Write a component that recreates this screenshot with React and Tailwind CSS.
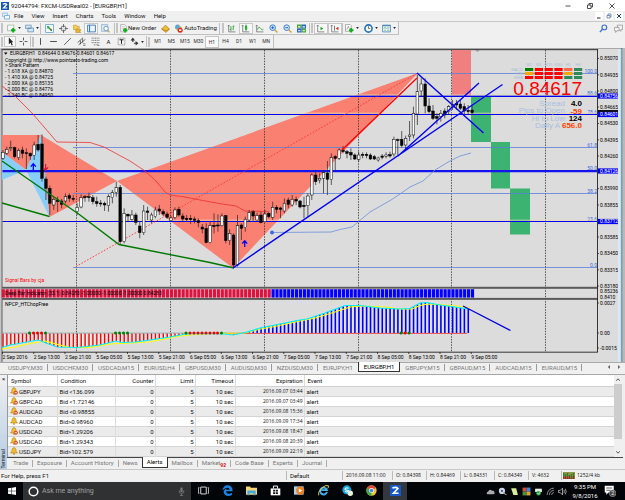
import React, { useState } from 'react'

const MENU = ['File', 'View', 'Insert', 'Charts', 'Tools', 'Window', 'Help']
const PERIODS = ['M1', 'M5', 'M15', 'M30', 'H1', 'H4', 'D1', 'W1', 'MN']

const CHART_TABS = [
  'USDJPY,M30', 'USDCHF,M30', 'USDCAD,M15', 'EURUSD,H4', 'GBPUSD,M30', 'AUDUSD,M30', 'NZDUSD,M30',
  'EURJPY,H1', 'EURGBP,H1', 'GBPJPY,M15', 'GBPAUD,M15', 'AUDCAD,M15', 'EURAUD,M15',
]

const TERMINAL_TABS = [
  'Trade', 'Exposure', 'Account History', 'News', 'Alerts', 'Mailbox', 'Market', 'Code Base', 'Experts', 'Journal',
]

const ALERTS = [
  { symbol: 'GBPJPY', condition: 'Bid <136.099', expiration: '2016.09.07 03:44', off: true },
  { symbol: 'GBPCAD', condition: 'Bid <1.72146', expiration: '2016.09.07 03:49', off: true },
  { symbol: 'AUDCAD', condition: 'Bid <0.98855', expiration: '2016.09.08 15:36', off: true },
  { symbol: 'AUDCAD', condition: 'Bid>0.98960', expiration: '2016.09.09 17:34', off: false },
  { symbol: 'USDCAD', condition: 'Bid>1.29206', expiration: '2016.09.08 18:47', off: true },
  { symbol: 'USDCAD', condition: 'Bid>1.29343', expiration: '2016.09.08 20:39', off: true },
  { symbol: 'USDJPY', condition: 'Bid>102.579', expiration: '2016.09.09 22:19', off: false },
]

const QUOTE = ['O: 0.84398', 'H: 0.84469', 'L: 0.84331', 'C: 0.84349']

// high, body top, body bottom, low, 1 = bullish (in thirds of a pixel from the chart top)
const CANDLES = [
  [315, 322, 340, 345, 1], [305, 313, 325, 330, 1], [287, 308, 311, 318, 1], [305, 308, 335, 340, 0],
  [310, 316, 338, 345, 1], [305, 315, 325, 340, 0], [310, 323, 326, 372, 0], [322, 325, 333, 345, 0],
  [290, 300, 332, 345, 1], [270, 298, 315, 320, 0], [268, 297, 400, 410, 0], [395, 402, 430, 465, 0],
  [422, 430, 475, 510, 0], [455, 463, 480, 495, 1], [455, 465, 470, 500, 0], [462, 468, 478, 490, 0],
  [445, 455, 468, 475, 1], [445, 452, 460, 470, 0], [450, 460, 463, 470, 0], [475, 487, 500, 510, 1],
  [448, 458, 486, 490, 1], [450, 455, 458, 470, 0], [443, 455, 458, 470, 0], [450, 458, 470, 478, 0],
  [455, 470, 476, 485, 0], [465, 474, 477, 485, 0], [470, 475, 480, 498, 0], [448, 455, 482, 500, 1],
  [435, 443, 458, 475, 1], [410, 428, 443, 455, 1], [420, 427, 590, 600, 0], [490, 505, 590, 595, 1],
  [505, 508, 513, 530, 0], [495, 510, 523, 527, 1], [503, 510, 532, 540, 0], [530, 543, 563, 580, 0],
  [480, 498, 563, 570, 1], [485, 498, 502, 525, 0], [503, 510, 525, 535, 1], [485, 495, 515, 520, 1],
  [480, 492, 498, 510, 0], [493, 500, 507, 513, 0], [500, 507, 517, 521, 0], [513, 519, 527, 530, 1],
  [487, 495, 518, 523, 1], [485, 493, 510, 515, 0], [505, 513, 522, 530, 0], [510, 520, 524, 530, 0],
  [510, 520, 524, 537, 0], [515, 522, 526, 535, 0], [520, 527, 533, 547, 0], [537, 546, 552, 565, 0],
  [535, 550, 593, 595, 0], [530, 542, 593, 595, 1], [505, 541, 545, 565, 0], [508, 540, 543, 560, 0],
  [505, 513, 542, 545, 1], [510, 512, 587, 595, 0], [553, 565, 587, 600, 1], [565, 570, 660, 668, 0],
  [510, 542, 660, 665, 1], [535, 540, 550, 585, 0], [515, 523, 548, 560, 1], [495, 503, 525, 530, 1],
  [495, 500, 513, 530, 0], [503, 512, 525, 527, 1], [500, 510, 533, 535, 0], [495, 507, 530, 533, 1],
  [500, 505, 515, 520, 0], [470, 487, 517, 525, 1], [480, 487, 493, 505, 0], [485, 489, 493, 520, 0],
  [460, 475, 498, 505, 1], [458, 465, 478, 490, 0], [450, 463, 480, 485, 1], [455, 463, 468, 480, 0],
  [465, 468, 486, 490, 0], [455, 481, 485, 520, 0], [445, 453, 482, 517, 1], [385, 390, 450, 465, 1],
  [380, 390, 410, 420, 0], [385, 400, 405, 415, 1], [375, 383, 400, 445, 1], [348, 384, 403, 450, 0],
  [325, 338, 404, 420, 1], [330, 335, 340, 375, 0], [310, 315, 340, 345, 1], [303, 315, 320, 325, 0],
  [315, 320, 325, 340, 0], [310, 322, 330, 345, 0], [325, 330, 342, 345, 0], [320, 330, 343, 350, 1],
  [322, 328, 331, 340, 0], [322, 328, 332, 340, 0], [325, 330, 342, 345, 0], [330, 335, 342, 345, 0],
  [335, 339, 345, 350, 1], [327, 333, 337, 343, 0], [322, 330, 334, 340, 1], [320, 329, 333, 338, 0],
  [275, 283, 327, 335, 1], [280, 284, 287, 330, 0], [258, 283, 301, 308, 0], [272, 280, 300, 315, 1],
  [228, 270, 274, 288, 1], [185, 205, 270, 280, 1], [90, 140, 207, 240, 1], [100, 117, 138, 155, 1],
  [100, 117, 183, 205, 0], [160, 183, 200, 205, 0], [180, 198, 220, 225, 0], [205, 215, 220, 238, 0],
  [195, 205, 215, 230, 1], [190, 198, 210, 220, 0], [180, 185, 200, 210, 1], [165, 178, 188, 195, 1],
  [165, 175, 180, 195, 0], [165, 177, 190, 195, 0], [175, 185, 198, 210, 0], [180, 196, 200, 210, 0],
  [182, 195, 203, 210, 0],
]

const STEP = 3.91
const barX = (i) => 2.9 + i * STEP
const barY = (v) => 45 + v / 3

// fast line of the lower indicator, also the top of its histogram
const FAST = [
  [2, 347.5], [10, 345], [27, 342], [38, 340], [46, 343], [57, 347], [77, 347.5], [100, 345], [116, 341],
  [122, 342.5], [135, 342], [150, 340], [170, 337], [186, 334], [205, 333.5], [225, 334], [233, 335],
  [245, 332.5], [262, 327.5], [270, 326], [300, 320], [307, 319], [322, 314], [333, 310], [345, 305.5],
  [360, 305.5], [380, 308], [400, 309], [410, 308.5], [420, 303], [427, 302.5], [440, 305], [455, 307], [468, 309],
]
const SLOW = [
  [2, 349], [15, 347], [30, 343.5], [45, 341], [60, 345], [70, 347.5], [90, 347.5], [110, 344], [130, 343],
  [148, 342], [165, 339], [180, 336], [195, 334.5], [215, 333.5], [245, 333], [260, 329], [270, 327.5],
  [300, 321], [315, 318], [335, 312], [350, 307], [360, 306], [385, 307], [400, 309], [412, 309], [420, 305.5],
  [428, 304], [445, 305], [462, 306.5], [470, 308],
]

const fastAt = (x) => {
  const k = FAST.findIndex((p) => p[0] >= x)
  if (k < 1) return FAST[k === 0 ? 0 : FAST.length - 1][1]
  const [x0, y0] = FAST[k - 1]
  const [x1, y1] = FAST[k]
  return y0 + ((y1 - y0) * (x - x0)) / (x1 - x0)
}

const LEVELS = [
  [73.5, '100.0'], [96, '88.6'], [114.5, '78.6'], [147.5, '61.8'], [171, '50.0'], [193.5, '38.2'],
  [221.5, '23.6'], [267.5, '0.0'],
]

const SCALE = [
  [58.5, '0.85070'], [74.8, '0.84935'], [91, '0.84800'], [107, '0.84665'], [123.5, '0.84530'],
  [139.8, '0.84395'], [156, '0.84260'], [188.6, '0.83990'], [205, '0.83855'], [237, '0.83585'],
  [253.5, '0.83450'], [269.8, '0.83315'], [286, '0.83180'], [303, '0.0027'], [333, '0.00'], [348, '-0.0015'],
]

const TAGS = [[96, '0.84756'], [114.5, '0.84601'], [171, '0.84126'], [221.5, '0.83712']]

const DATES = [
  '2 Sep 2016', '2 Sep 13:00', '2 Sep 21:00', '5 Sep 05:00', '5 Sep 13:00', '5 Sep 21:00', '6 Sep 05:00',
  '6 Sep 13:00', '6 Sep 21:00', '7 Sep 05:00', '7 Sep 13:00', '7 Sep 21:00', '8 Sep 05:00', '8 Sep 13:00',
  '8 Sep 21:00', '9 Sep 05:00',
]

const SIGNALS = [
  ['#008000', '#f00', '#f00', '#f00', '#ff6347', '#2e8b57'],
  ['#ffa500', '#f00', '#f00', '#f00', '#ffa500', '#2e8b57'],
  ['#f00', '#f00', '#f00', '#f00', '#2e8b57', '#2e8b57'],
]

const DOTS = [
  [29.5, 'g'], [33.5, 'r'], [37.5, 'r'], [41.5, 'r'], [45.5, 'g'], [115.5, 'g'], [119.5, 'g'], [123.5, 'g'],
  [127.5, 'g'], [186, 'g'], [190, 'r'], [194, 'r'], [198, 'r'], [202, 'r'], [206, 'r'], [210, 'r'], [214, 'r'],
  [217.5, 'r'], [221.5, 'g'], [401, 'g'], [405, 'r'], [409, 'g'],
]

const INFO = [
  'Copyright @ http://www.pointzero-trading.com', '> Shark Pattern', '- 1.618 XA @ 0.84870',
  '- 1.410 XA @ 0.84725', '- 2.000 XA @ 0.85135', '- 2.000 BC @ 0.84776', '- 2.240 BC @ 0.84950',
]

const pts = (list) => list.map((p) => p.join(',')).join(' ')

function Chart() {
  return (
    <svg
      viewBox="0 48 625 314"
      className="block w-full font-['Roboto','Open_Sans',sans-serif] text-[5px]"
      role="img"
      aria-label="EURGBP H1 chart"
    >
      <rect x="0" y="48" width="625" height="314" fill="#dcdcdc" />
      <rect x="0" y="48" width="625" height="1" fill="#a8a8a8" />
      <rect x="0" y="48" width="1.5" height="314" fill="#c4c4c4" />
      <rect x="1.5" y="49" width="596" height="1.2" fill="#4a4a4a" />
      <rect x="1.5" y="49" width="1" height="313" fill="#5a5a5a" />

      {/* shark pattern */}
      <polygon points="2,135 41,135 26,170 2,152" fill="#fa8072" />
      <polygon points="2,152 26,170 2,180" fill="#87cefa" />
      <polygon points="41,135 49.5,217 26,170" fill="#87cefa" />
      <polygon points="41,135 117,181 49.5,217" fill="#fa8072" />
      <polygon points="117,181 418,73 233,268" fill="#fa8072" />

      <rect x="452" y="50" width="19" height="46" fill="#f08080" />
      <rect x="471" y="96" width="20" height="46" fill="#3cb371" />
      <rect x="491" y="142" width="19" height="46.5" fill="#3cb371" />
      <rect x="510" y="188.5" width="20" height="46" fill="#3cb371" />

      {/* day separators */}
      {[76.5, 170.5, 264.5, 358.5, 451.5, 545.5].map((x) => (
        <line key={x} x1={x} x2={x} y1="50" y2="352" stroke="#333" strokeWidth="0.8" strokeDasharray="1.5 1.2" />
      ))}

      {/* fibo and pivot levels */}
      {LEVELS.map(([y, label]) => (
        <g key={label}>
          <line x1="73" x2="597" y1={y} y2={y} stroke="#5b7fdc" strokeWidth="0.8" />
          <text x="597" y={y - 1} textAnchor="end" fill="#4169e1">{label}</text>
        </g>
      ))}
      <path d="M2.5 95H597M2.5 113.2H597M2.5 220.2H597" stroke="#e6dcb0" strokeWidth="0.8" />
      <path d="M2.5 96.3H597M2.5 114.5H597M2.5 221.5H597" stroke="#0000f0" strokeWidth="1.2" />
      <path d="M2.5 171.2H597" stroke="#1414ee" strokeWidth="2.2" />

      {/* moving averages */}
      <polyline
        points="2,86 14,95 32,113 57,142 90,142.5 104,147 130,161 145,171 156,181 165,192 170,195 185,197 200,200 222,204 236,206 245,211 268,211.5"
        fill="none" stroke="#f03030" strokeWidth="0.8"
      />
      <polyline
        points="272,232.5 331,232 340,229.5 352,227 358,222 370,212 391,200 400,194 410,187 423,181 435,170 450,161 460,156 471,153"
        fill="none" stroke="#6a8fdc" strokeWidth="0.8"
      />
      <circle cx="272" cy="232.5" r="2" fill="#4169e1" />
      <line x1="76" y1="266.5" x2="418" y2="73" stroke="#f33" strokeWidth="0.9" strokeDasharray="1.6 1.6" />

      {/* candles */}
      {CANDLES.map(([high, top, bottom, low, up], i) => (
        <g key={i}>
          <line x1={barX(i)} x2={barX(i)} y1={barY(high)} y2={barY(low)} stroke="#222" strokeWidth="0.7" />
          <rect
            x={barX(i) - 1.3}
            y={barY(top)}
            width="2.6"
            height={Math.max((bottom - top) / 3, 0.8)}
            fill={up ? '#fff' : '#000'}
            stroke="#000"
            strokeWidth="0.5"
          />
        </g>
      ))}

      {/* trend lines */}
      <path d="M2 161L80 215L119 244.5L210 262.5L234 268M2 203L49.5 216.5" fill="none" stroke="#007a00" strokeWidth="1.4" />
      <path d="M342 150L417 78" stroke="#f00" strokeWidth="1.3" />
      <path d="M233 268L502.5 84.5M398 156L479 83M417 73L483.5 133" stroke="#0000f5" strokeWidth="1.4" />
      <path d="M33.3 170V164M30.8 166.6L33.3 163.8L35.8 166.6" fill="none" stroke="#00f" strokeWidth="1.3" />
      <path d="M45.6 164V170M43.1 167.4L45.6 170.2L48.1 167.4" fill="none" stroke="#dc143c" strokeWidth="1.3" />
      <path d="M244.7 247V241M242.2 243.6L244.7 240.8L247.2 243.6" fill="none" stroke="#00f" strokeWidth="1.3" />
      <path d="M475 50H480L477.5 52Z" fill="#999" />

      {/* header texts */}
      <path d="M4 52.5H7.5L5.75 54.8Z" fill="#000" />
      <text x="10" y="55" xmlSpace="preserve">EURGBP,H1  0.84644 0.84676 0.84601 0.84617</text>
      {INFO.map((line, i) => (
        <text key={line} x="5" y={61.5 + i * 5.9}>{line}</text>
      ))}
      <text x="5" y="281.5" fill="#f00" className="text-[5px]">Signal Bars by cja</text>

      {/* signal panel */}
      <g fill="#a9bcd8" className="font-['Liberation_Sans',Arial,sans-serif] text-[4px]">
        {['M1', 'M5', 'M15', 'M30', 'H1', 'H4'].map((p, i) => (
          <text key={p} x={529 + i * 9.8} y="66" textAnchor="middle">{p}</text>
        ))}
        {['MACD', 'STR', 'EMA'].map((p, i) => (
          <text key={p} x="523" y={71 + i * 4} textAnchor="end">{p}</text>
        ))}
      </g>
      {SIGNALS.map((row, r) =>
        row.map((color, c) => (
          <rect key={`${r}-${c}`} x={525 + c * 9.8} y={68 + r * 4} width="8.2" height="3" fill={color} />
        ))
      )}
      <g textAnchor="end" className="font-['Liberation_Sans',Arial,sans-serif] text-[8px]">
        <text x="582" y="95" fill="#f00" className="text-[19px]">0.84617</text>
        <g fill="#a9c0e0">
          <text x="565" y="106">Spread</text>
          <text x="565" y="113">Pips to Open</text>
          <text x="565" y="120.5">Hi to Low</text>
          <text x="560" y="128">Daily A</text>
        </g>
        <g className="font-bold">
          <text x="582" y="106">4.0</text>
          <text x="582" y="113.5" fill="#ff4500">-59</text>
          <text x="582" y="121">124</text>
          <text x="582" y="128" fill="#ff4500">656.0</text>
        </g>
      </g>

      {/* deep bar indicator */}
      <rect x="2" y="286.8" width="596" height="2" fill="#5a5a5a" />
      <rect x="2" y="297.9" width="596" height="2" fill="#5a5a5a" />
      <rect x="2" y="288.8" width="471" height="9" fill="#e8d8e8" />
      {CANDLES.map((c, i) => (
        <rect key={i} x={barX(i) - 1.2} y="289.2" width="3.2" height="8.4" fill={i < 69 ? '#dc143c' : '#00f'} />
      ))}
      <text x="5" y="295">Deep Bar Indicator (33.1) 0.84283 -1.00000 -1.00000 -1.00000 0.84283</text>

      {/* lower indicator */}
      <line x1="2.5" x2="250" y1="333.2" y2="333.2" stroke="#6f9aa0" strokeWidth="0.8" />
      {CANDLES.slice(0, 120).map((c, i) => {
        const x = barX(i)
        const y = fastAt(x)
        return y > 333.2 ? (
          <g key={i}>
            <rect x={x - 0.6} y="333.5" width="2.4" height={y - 333.5 + 0.1} fill="#fff" opacity="0.8" />
            <rect x={x - 0.6} y="333.5" width="1.4" height={y - 333.4} fill="#f00000" />
          </g>
        ) : (
          <g key={i}>
            <rect x={x - 1} y={y} width="3" height={333 - y} fill="#e4e4ff" />
            <rect x={x - 0.7} y={y} width="1.6" height={333 - y} fill="#0000f0" />
          </g>
        )
      })}
      <line x1="221" x2="467" y1="333.4" y2="333.4" stroke="#f04040" strokeWidth="0.9" />
      <polyline points={pts(SLOW)} fill="none" stroke="#ff0" strokeWidth="1.2" />
      <polyline points={pts(FAST)} fill="none" stroke="#00f0f5" strokeWidth="1.2" />
      {DOTS.map(([x, c]) => (
        <circle key={x} cx={x} cy="333" r="1.5" fill={c === 'g' ? '#008000' : '#f00000'} />
      ))}
      <line x1="463" y1="306" x2="510.5" y2="330.5" stroke="#0000e0" strokeWidth="1.4" />
      <text x="5" y="306">NPCP_HTChopFree</text>

      {/* axes */}
      <path d="M597.5 49V352.4M2 352.2H597.5" stroke="#222" strokeWidth="0.9" />
      {DATES.map((d, i) => (
        <g key={d}>
          <line x1={2.5 + i * 31.25} x2={2.5 + i * 31.25} y1="352" y2="354" stroke="#222" strokeWidth="0.8" />
          <text x={2.5 + i * 31.25} y="358.5">{d}</text>
        </g>
      ))}
      {SCALE.map(([y, label]) => (
        <g key={label}>
          <line x1="597" x2="599" y1={y} y2={y} stroke="#222" strokeWidth="0.7" />
          <text x="600" y={y + 1.8}>{label}</text>
        </g>
      ))}
      <text x="600" y="293.3">0.85236</text>
      <text x="600" y="298.8">0.8410</text>
      <rect x="598" y="110" width="20" height="4" fill="#111" />
      {TAGS.map(([y, label]) => (
        <g key={label}>
          <rect x="598" y={y - 2.6} width="20" height="5.2" fill="#00f" />
          <text x="600" y={y + 1.8} fill="#fff">{label}</text>
        </g>
      ))}

      {/* window frame on the right */}
      <rect x="618.5" y="49" width="3" height="313" fill="#bfe0f2" />
      <rect x="618.5" y="49" width="1" height="313" fill="#eef4f8" />
      <rect x="621.5" y="48" width="1" height="314" fill="#2c5f70" />
      <rect x="622.5" y="48" width="2.5" height="314" fill="#b8b8b8" />
    </svg>
  )
}

function Icon({ children, label, className = 'size-[9px]' }) {
  return (
    <svg viewBox="0 0 16 16" className={`${className} block shrink-0`} role="img" aria-label={label} fill="none">
      {children}
    </svg>
  )
}

function Caret() {
  return (
    <svg viewBox="0 0 4 3" className="ml-[2px] h-[2px] w-[3px] shrink-0" aria-hidden="true">
      <path d="M0 0H4L2 3Z" fill="#222" />
    </svg>
  )
}

function Tool({ label, pressed, width = 'w-[14px]', caret, children }) {
  return (
    <button
      type="button"
      aria-label={label}
      className={`flex h-[11px] ${width} shrink-0 items-center justify-center ${
        pressed ? 'border border-[#c8c8c8] bg-[#f8f8f8]' : ''
      }`}
    >
      <Icon>{children}</Icon>
      {caret && <Caret />}
    </button>
  )
}

function Sep() {
  return <span className="h-[11px] w-px shrink-0 bg-[#c0c0c0]" />
}

function Grip() {
  return <span className="mx-[1px] h-[10px] w-[2px] shrink-0 border-x border-[#c4c4c4]" />
}

const plus = <path d="M11 7V15M7 11H15" stroke="#0fae1c" strokeWidth="3.4" />
const axes = <path d="M3 2V14H15M1 4L3 2L5 4" stroke="#666" strokeWidth="1.3" />

function TopToolbar() {
  return (
    <div className="flex h-[13px] items-center justify-between">
      <div className="flex h-[13px] items-center border-r border-b border-[#c0c0c0] bg-[#f1f1f1]">
        <Grip />
        <Tool label="New chart" width="w-[19px]" caret>
          <path d="M1 2H12V12H1Z" fill="#fff" stroke="#6c9c6c" />
          {plus}
        </Tool>
        <Tool label="Profiles" width="w-[17px]" caret>
          <path d="M1 2H11V8H1ZM5 7H15V14H5Z" fill="#d4e6f5" stroke="#5f8fb4" strokeWidth="1.3" />
        </Tool>
        <Sep />
        <span className="w-[1px]" />
        <Tool label="Market watch">
          <path d="M1 1H15V15H1Z" fill="#fff" stroke="#5a9ad0" strokeWidth="1.4" />
          <path d="M3 8L7 3L8 7Z" fill="#1ca03a" />
          <path d="M8 8L13 9L11 13Z" fill="#e0402a" />
          <path d="M4 4L12 12" stroke="#1ca03a" strokeWidth="2" />
        </Tool>
        <Tool label="Data window">
          <circle cx="8" cy="8" r="4.5" stroke="#555" strokeWidth="1.4" />
          <path d="M8 0V6M8 10V16M0 8H6M10 8H16" stroke="#555" strokeWidth="1.4" />
        </Tool>
        <Tool label="Navigator">
          <path d="M1 2H6L7 4H11V10H1Z" fill="#f4cf5a" stroke="#b88d1c" />
          <path d="M8 8L10 11L14 10L12 13L14 15H5V10Z" fill="#f0b92c" stroke="#b0821a" />
        </Tool>
        <Tool label="Terminal" pressed>
          <path d="M1 2H15V14H1Z" fill="#eaf4fc" stroke="#3d7cb4" strokeWidth="1.6" />
          <path d="M4.5 2V14" stroke="#3d7cb4" strokeWidth="2" />
        </Tool>
        <Tool label="Strategy tester">
          <path d="M1 1H12V13H1Z" fill="#dcebf6" stroke="#6f9cc0" />
          <circle cx="9" cy="8" r="4" fill="#f6fbff" stroke="#5a88ae" strokeWidth="1.4" />
          <path d="M12 11L15 15" stroke="#c99a32" strokeWidth="2" />
        </Tool>
        <span className="w-[2px]" />
        <Sep />
        <Grip />
        <button type="button" className="flex items-center whitespace-nowrap">
          <Icon>
            <path d="M3 1H10L13 4V14H3Z" fill="#fff" stroke="#888" />
            <path d="M5 5H11M5 8H9" stroke="#999" />
            {plus}
          </Icon>
          New Order
        </button>
        <span className="w-[2px]" />
        <Tool label="MetaEditor">
          <path d="M1 9L8 2L15 9L9 15Z" fill="#f0bb35" stroke="#a87812" strokeWidth="1.2" />
          <path d="M1 9L9 12L15 9" stroke="#a87812" />
        </Tool>
        <button type="button" className="ml-[2px] flex items-center gap-px whitespace-nowrap">
          <Icon>
            <path d="M2 7L8 2L14 7L9 13Z" fill="#efbe48" stroke="#a77a1a" />
            <circle cx="6" cy="5" r="4" fill="#5ba4dc" />
            <circle cx="11" cy="11" r="4.5" fill="#dd2a1c" />
            <path d="M9 9.5H13V12.5H9Z" fill="#fff" />
          </Icon>
          AutoTrading
        </button>
        <span className="w-[2px]" />
        <Sep />
        <span className="w-[1px]" />
        <Grip />
        <Tool label="Bar chart">
          {axes}
          <path d="M7 4V12M11 3V11M11 4H13M5 10H7" stroke="#1a9a2c" strokeWidth="1.5" />
        </Tool>
        <Tool label="Candlesticks" pressed>
          {axes}
          <path d="M9 1V13" stroke="#087a1c" strokeWidth="1.2" />
          <path d="M7 3H11V10H7Z" fill="#17b52e" />
        </Tool>
        <Tool label="Line chart">
          {axes}
          <path d="M4 10Q7 3 10 8T15 9" stroke="#1a9a2c" strokeWidth="1.4" />
        </Tool>
        <Tool label="Zoom in">
          <circle cx="6.5" cy="6.5" r="5" fill="#cfe6fa" stroke="#2f77c8" strokeWidth="1.6" />
          <path d="M4 6.5H9M6.5 4V9" stroke="#1d5fb4" strokeWidth="1.6" />
          <path d="M10 10L15 15" stroke="#d0a030" strokeWidth="2.4" />
        </Tool>
        <Tool label="Zoom out">
          <circle cx="6.5" cy="6.5" r="5" fill="#cfe6fa" stroke="#2f77c8" strokeWidth="1.6" />
          <path d="M4 6.5H9" stroke="#1d5fb4" strokeWidth="1.6" />
          <path d="M10 10L15 15" stroke="#d0a030" strokeWidth="2.4" />
        </Tool>
        <Tool label="Tile windows">
          <path d="M0 1H8V8H0ZM8 8H16V15H8Z" fill="#4aa83a" />
          <path d="M8 1H16V8H8ZM0 8H8V15H0Z" fill="#2f66c4" />
          <path d="M2 4H6V6H2ZM10 4H14V6H10ZM2 11H6V13H2ZM10 11H14V13H10Z" fill="#fff" />
        </Tool>
        <Sep />
        <Grip />
        <Tool label="Auto scroll" pressed>
          {axes}
          <path d="M8 5L13 8L8 11Z" fill="#17a52c" />
        </Tool>
        <Tool label="Chart shift" pressed>
          {axes}
          <path d="M8 3V12" stroke="#555" strokeWidth="1.3" />
          <path d="M15 5L10 8L15 11Z" fill="#d03a20" />
        </Tool>
        <Sep />
        <Tool label="Indicators" width="w-[19px]" caret>
          <path d="M1 1H9L11 3V13H1Z" fill="#fff" stroke="#777" />
          <path d="M3 10L6 4L8 8" stroke="#666" />
          {plus}
        </Tool>
        <Tool label="Periods" width="w-[18px]" caret>
          <circle cx="8" cy="8" r="6.4" fill="#fff" stroke="#1e6fc0" strokeWidth="2.8" />
          <path d="M8 4V8H11" stroke="#333" strokeWidth="1.2" />
        </Tool>
        <Tool label="Templates" width="w-[18px]" caret>
          <path d="M1 2H15V14H1Z" fill="#edf6fc" stroke="#4a86b8" strokeWidth="1.4" />
          <path d="M1 3H15" stroke="#4a86b8" strokeWidth="2" />
          <path d="M3 8L6 6L8 9M9 7H13M4 11H7M9 11H13" stroke="#4f9a5a" strokeWidth="1.2" />
        </Tool>
      </div>
      <div className="flex items-center gap-[1px]">
        <Tool label="Search">
          <circle cx="9.5" cy="6" r="4.2" stroke="#3a6fd8" strokeWidth="2" />
          <path d="M6.5 9L1.5 14.5" stroke="#3a6fd8" strokeWidth="2.4" />
        </Tool>
        <Tool label="Chat">
          <path d="M6 2H15V10H12V13L9 10H6Z" fill="#f4f4f4" stroke="#888" strokeWidth="1.2" />
          <path d="M1 6H9V12H5L3 15V12H1Z" fill="#fafafa" stroke="#888" strokeWidth="1.2" />
        </Tool>
      </div>
    </div>
  )
}

function DrawToolbar() {
  return (
    <div className="flex h-[13px] items-center">
      <div className="flex h-[13px] items-center border-r border-[#c0c0c0] bg-[#f1f1f1]">
        <Grip />
        <Tool label="Cursor" width="w-[12px]" pressed>
          <path d="M5 1V13L8 10L10 15L12 14L10 9.5H13Z" fill="#222" />
        </Tool>
        <Tool label="Crosshair">
          <path d="M8 1V6M8 10V15M1 8H6M10 8H15" stroke="#333" strokeWidth="1.4" />
        </Tool>
        <Sep />
        <Grip />
        <Tool label="Vertical line" width="w-[11px]">
          <path d="M8 2V14" stroke="#333" strokeWidth="1.5" />
        </Tool>
        <Tool label="Horizontal line">
          <path d="M2 8H14" stroke="#333" strokeWidth="1.5" />
        </Tool>
        <Tool label="Trendline">
          <path d="M2 14L14 2" stroke="#333" strokeWidth="1.3" />
        </Tool>
        <Tool label="Equidistant channel">
          <path d="M1 10L11 1M3 14L15 4M6 6V13M10 3V10" stroke="#333" strokeWidth="1.2" />
          <path d="M11 12H15M11 15H15" stroke="#333" />
        </Tool>
        <Tool label="Fibonacci retracement">
          <path d="M1 2H15M1 6H15M1 10H15M5 14H11" stroke="#444" strokeWidth="1.2" strokeDasharray="2 1" />
          <path d="M12 12V15H15" stroke="#333" />
        </Tool>
        <button type="button" className="h-[11px] w-[13px] text-center leading-[11px]">A</button>
        <Tool label="Text label" width="w-[13px]">
          <path d="M2 2H14V14H2Z" stroke="#555" strokeDasharray="2 1" />
          <path d="M4.5 5H11.5M8 5V12" stroke="#222" strokeWidth="1.8" />
        </Tool>
        <Tool label="Arrows" width="w-[18px]" caret>
          <path d="M1 6L5 1L9 6H6V9H4V6Z" fill="#333" />
          <path d="M7 10H10V7L15 11L10 15V12H7Z" fill="#333" />
        </Tool>
        <Sep />
        <Grip />
        <div className="grid w-[122px] grid-cols-9 text-[5px] text-[#333]">
          {PERIODS.map((p) => (
            <button
              key={p}
              type="button"
              aria-pressed={p === 'H1'}
              className={`h-[12px] text-center leading-[11px] ${p === 'H1' ? 'border border-[#c4c4c4] bg-[#fafafa]' : ''}`}
            >
              {p}
            </button>
          ))}
        </div>
      </div>
    </div>
  )
}

function Bell({ off }) {
  return (
    <Icon className="size-[8px]">
      <path d="M8 1C4 2 4 6 3.5 9L1 12H15L12.5 9C12 6 12 2 8 1Z" fill="#f5bd2e" stroke="#a9780f" strokeWidth="1.2" />
      <path d="M6 13H10V15H6Z" fill="#a9780f" />
      {off && <circle cx="11.5" cy="11.5" r="4.2" fill="#e04a2c" />}
      {off && <path d="M9 11.5H14" stroke="#fff" strokeWidth="1.6" />}
    </Icon>
  )
}

function Terminal() {
  const [tab, setTab] = useState('Alerts')
  const cell = 'border-r border-[#dcdcdc] p-0 pr-[1px] text-right'

  return (
    <section className="flex border-t border-[#a8a8a8] bg-[#f0f0f0]">
      <div className="flex w-[7px] shrink-0 flex-col items-center justify-between bg-linear-to-b from-[#f0f0f0] to-[#b4cbe4]">
        <button type="button" aria-label="Close terminal" className="pt-[1px] leading-[6px]">×</button>
        <span className="rotate-180 text-[5px] leading-[7px] [writing-mode:vertical-rl]">Terminal</span>
      </div>
      <div className="min-w-0 flex-1">
        <div className="flex border-l border-[#999] bg-white">
          <table className="flex-1 table-fixed border-collapse leading-[9px]">
            <colgroup>
              <col className="w-[49px]" />
              <col className="w-[58px]" />
              <col className="w-[40px]" />
              <col className="w-[40px]" />
              <col className="w-[40px]" />
              <col className="w-[69px]" />
              <col />
            </colgroup>
            <thead>
              <tr className="h-[11px] border-b border-[#d0d0d0]">
                <th className="border-r border-[#dcdcdc] p-0 pl-[3px] text-left font-normal">Symbol</th>
                <th className="border-r border-[#dcdcdc] p-0 pl-[3px] text-left font-normal">Condition</th>
                <th className={`${cell} font-normal`}>Counter</th>
                <th className={`${cell} font-normal`}>Limit</th>
                <th className={`${cell} font-normal`}>Timeout</th>
                <th className={`${cell} font-normal`}>Expiration</th>
                <th className="p-0 pl-[3px] text-left font-normal">Event</th>
              </tr>
            </thead>
            <tbody>
              {ALERTS.map((a) => (
                <tr key={a.expiration} className="h-[10px] border-b border-[#d4d4d4] odd:bg-[#ebebeb]">
                  <td className="border-r border-[#dcdcdc] p-0 pl-[2px]">
                    <span className="flex items-center gap-px">
                      <Bell off={a.off} />
                      {a.symbol}
                    </span>
                  </td>
                  <td className="border-r border-[#dcdcdc] p-0 pl-[2px]">{a.condition}</td>
                  <td className={cell}>0</td>
                  <td className={cell}>5</td>
                  <td className={cell}>10 sec</td>
                  <td className={`${cell} font-['Open_Sans',sans-serif] text-[5px]`}>{a.expiration}</td>
                  <td className="p-0 pl-[2px]">alert</td>
                </tr>
              ))}
            </tbody>
          </table>
          <div className="flex w-[8px] shrink-0 flex-col items-center bg-[#f0f0f0] py-[3px]">
            <svg viewBox="0 0 6 4" className="h-[3px] w-[4px]" fill="none"><path d="M0 4L3 1L6 4" stroke="#444" strokeWidth="1.4" /></svg>
            <div className="mt-[3px] mb-[12px] w-full flex-1 bg-[#cdcdcd]" />
            <svg viewBox="0 0 6 4" className="h-[3px] w-[4px]" fill="none"><path d="M0 0L3 3L6 0" stroke="#444" strokeWidth="1.4" /></svg>
          </div>
          <span className="w-[3px] bg-[#f0f0f0]" />
        </div>
        <div className="mr-[2px] flex h-[12px] items-start border-t border-[#444] pl-[2px] leading-[9px] text-[#777]">
          {TERMINAL_TABS.map((t) => (
            <button
              key={t}
              type="button"
              onClick={() => setTab(t)}
              className={
                t === tab
                  ? '-mt-px h-[11px] border border-t-0 border-[#333] bg-white px-[4px] text-black'
                  : 'flex px-[4px]'
              }
            >
              {t}
              {t === 'Market' && <sub className="text-[5px] leading-[12px] font-bold text-[#e00]">92</sub>}
              {t !== tab && t !== 'News' && <span className="-mr-[4px] ml-[4px] mt-[2px] h-[7px] w-px bg-[#aaa]" />}
            </button>
          ))}
        </div>
      </div>
    </section>
  )
}

function StatusBar() {
  return (
    <footer className="flex h-[13px] items-center border-t border-[#c8c8c8] bg-[#f0f0f0] leading-[9px] whitespace-nowrap">
      <span className="flex-1 pl-[1px]">For Help, press F1</span>
      <span className="w-[56px] border-l border-[#bbb] pl-[3px]">Default</span>
      <div className="flex font-['Open_Sans',sans-serif] text-[5px]">
        <span className="w-[50px] border-l border-[#bbb] pl-[3px]">2016.09.08 11:00</span>
        {QUOTE.map((q) => (
          <span key={q} className="w-[34px] border-l border-[#bbb] pl-[3px]">{q}</span>
        ))}
        <span className="w-[33px] border-l border-[#bbb] pl-[3px]">V: 4632</span>
        <span className="flex w-[64px] items-center gap-[2px] border-l border-[#bbb] pl-[1px]">
          <svg viewBox="0 0 12 7" className="h-[7px] w-[12px]">
            <path d="M0 0H12V7H0Z" fill="#8a9a4a" />
            <path d="M0.5 7V1M2.5 7V2M4.5 7V1M6.5 7V3M8.5 7V2M10.5 7V1" stroke="#3f7a2c" strokeWidth="1.4" />
            <path d="M0.5 7V5M2.5 7V4M4.5 7V5M6.5 7V4M8.5 7V6M10.5 7V4" stroke="#a02c20" strokeWidth="1.4" />
          </svg>
          1252/4 kb
        </span>
      </div>
    </footer>
  )
}

function TaskButton({ label, open, active, children }) {
  return (
    <button
      type="button"
      aria-label={label}
      className={`flex h-[19px] w-[24px] items-center justify-center border-b ${
        open ? 'border-[#76b9ed]' : 'border-transparent'
      } ${active ? 'bg-[#33383e]' : ''}`}
    >
      <Icon className="size-[11px]">{children}</Icon>
    </button>
  )
}

function Taskbar() {
  return (
    <nav className="flex h-[19px] items-center bg-[#020508] text-white">
      <button type="button" aria-label="Start" className="flex w-[23px] justify-center">
        <Icon className="size-[8px]">
          <path d="M0 2.5L7 1.5V7.5H0ZM8 1.3L16 0V7.5H8ZM0 8.5H7V14.5L0 13.5ZM8 8.5H16V16L8 14.7Z" fill="#fff" />
        </Icon>
      </button>
      <label className="flex h-[19px] w-[168px] items-center gap-[3px] bg-[#303133] px-[5px]">
        <Icon className="size-[11px]"><circle cx="8" cy="8" r="6.3" stroke="#fff" strokeWidth="2.2" /></Icon>
        <input
          type="text"
          aria-label="Search"
          placeholder="Ask me anything"
          className="min-w-0 flex-1 bg-transparent text-[7px] leading-[10px] outline-none placeholder:text-[#a2a2a2]"
        />
        <Icon className="size-[9px]">
          <path d="M6 1H10V9H6Z" fill="#777" />
          <path d="M4 6V10Q8 13 12 10V6M8 12V15M5 15H11" stroke="#888" strokeWidth="1.2" />
        </Icon>
      </label>
      <TaskButton label="Task view">
        <path d="M4 3H12V13H4Z" stroke="#ddd" strokeWidth="1.4" />
        <path d="M2 4H0.5V12H2M14 4H15.5V12H14" stroke="#ddd" strokeWidth="1.3" />
      </TaskButton>
      <TaskButton label="Edge">
        <path d="M1 8C1 3 5 0 9 0.5C13 1 15.5 4 15.5 9H6C6 13 11 13.5 14.5 11.5V14.5C8 18 2 14.5 2.5 9.5C3 7 5 5.5 7 5C6 6 6 7 6 7H11C11 3 5 2.5 1 8Z" fill="#1a84e0" />
      </TaskButton>
      <TaskButton label="File explorer">
        <path d="M0 2H6L7 4H16V14H0Z" fill="#f7d673" />
        <path d="M2 8H14V15H11V12H5V15H2Z" fill="#45a7e0" />
      </TaskButton>
      <TaskButton label="Store">
        <path d="M1 5H15V15H1Z" fill="#fff" />
        <path d="M5 5V1.5H11V5" stroke="#fff" strokeWidth="1.4" />
        <path d="M4.5 7H7.5V9.5H4.5ZM8.5 7H11.5V9.5H8.5ZM4.5 10.5H7.5V13H4.5ZM8.5 10.5H11.5V13H8.5Z" fill="#111" />
      </TaskButton>
      <TaskButton label="Media player">
        <path d="M0 2H14V14H0Z" fill="#a9d3ef" />
        <circle cx="9" cy="8" r="6" fill="#f08222" />
        <path d="M7 5L12 8L7 11Z" fill="#fff" />
      </TaskButton>
      <TaskButton label="Internet Explorer">
        <path d="M13 10A5 5 0 1 1 13 7.5H5" stroke="#42b4f0" strokeWidth="2.8" />
        <path d="M1 15Q-1 11 5 5T15 1Q16 3 14 5" stroke="#f2c83c" strokeWidth="1.4" />
      </TaskButton>
      <TaskButton label="Skype" open>
        <circle cx="7" cy="7" r="6.5" fill="#12a5e8" />
        <path d="M9.5 5Q7 3 5 5T7.5 7.5T7 10Q5 10.5 4.5 9" stroke="#fff" strokeWidth="1.5" />
        <circle cx="12" cy="12" r="4" fill="#e6f2dc" />
      </TaskButton>
      <TaskButton label="Chrome" open>
        <circle cx="8" cy="8" r="7.5" fill="#f3c623" />
        <path d="M8 8L1.5 4.2A7.5 7.5 0 0 1 14.5 4.2Z" fill="#de4a3a" />
        <path d="M8 8L1.5 4.2A7.5 7.5 0 0 0 8 15.5Z" fill="#3aa757" />
        <circle cx="8" cy="8" r="3.6" fill="#fff" />
        <circle cx="8" cy="8" r="2.7" fill="#4a86e8" />
      </TaskButton>
      <TaskButton label="Trading terminal" open active>
        <path d="M0 0H16V16H0Z" fill="#1458c8" />
        <path d="M3.5 4.5Q9 2 11.5 5L5 12H12.5" stroke="#fff" strokeWidth="2.4" />
      </TaskButton>
      <div className="ml-auto flex items-center gap-[3px]">
        <Icon><path d="M2 13Q0 9 4 8Q6 3 10 6Q15 6 15 10Q16 13 13 13Z" fill="#a9adb2" /></Icon>
        <Icon>
          <circle cx="7" cy="7" r="5.5" fill="#cfd8e6" />
          <circle cx="7" cy="7" r="2" fill="#3c5f96" />
          <path d="M9 10L15 14" stroke="#9aa" strokeWidth="2" />
        </Icon>
        <Icon><path d="M2 2H11L14 14H6Z" fill="#d5ec9a" /></Icon>
        <Icon>
          <path d="M1 1H8V8H1Z" fill="#d94b32" /><path d="M8 1H15V8H8Z" fill="#3f87d4" />
          <path d="M1 8H8V15H1Z" fill="#4b8f3c" /><path d="M8 8H15V15H8Z" fill="#d8a23a" />
        </Icon>
        <Icon>
          <path d="M2 3H14V9H2Z" fill="#e8ede8" />
          <circle cx="8" cy="11" r="4" fill="#2ba84a" />
          <path d="M6 11L8 13L11 9" stroke="#fff" strokeWidth="1.2" />
        </Icon>
        <Icon>
          <path d="M2 14A12 12 0 0 1 14 2M6 14A8 8 0 0 1 14 6M10 14A4 4 0 0 1 14 10" stroke="#9a9a9a" strokeWidth="1.6" />
        </Icon>
        <Icon>
          <path d="M1 6H4L8 2V14L4 10H1Z" stroke="#ddd" strokeWidth="1.2" />
          <path d="M10.5 5Q12 8 10.5 11M13 3Q16 8 13 13" stroke="#ddd" strokeWidth="1.2" />
        </Icon>
      </div>
      <time className="ml-[5px] w-[26px] text-center text-[6px] leading-[9px] whitespace-nowrap">
        9:35 PM
        <br />
        9/8/2016
      </time>
      <button type="button" aria-label="Notifications" className="mr-[9px] ml-[6px]">
        <Icon className="size-[12px]">
          <path d="M1 1H13V10H6L3 13V10H1Z" fill="#fff" />
          <path d="M3 4H11M3 7H9" stroke="#333" />
          <circle cx="11.5" cy="11" r="4.5" fill="#444" stroke="#aaa" strokeWidth="0.8" />
          <text x="11.5" y="13.5" textAnchor="middle" fill="#fff" className="text-[7px]">2</text>
        </Icon>
      </button>
    </nav>
  )
}

export default function App() {
  const [chart, setChart] = useState('EURGBP,H1')

  return (
    <div className="flex min-h-screen flex-col overflow-hidden bg-[#f0f0f0] font-['Roboto','Open_Sans',sans-serif] text-[6px] leading-[8px] text-[#111]">
      <header className="flex h-[11px] items-center justify-between bg-white pl-[1px]">
        <div className="flex items-center gap-[2px]">
          <Icon className="size-[8px]">
            <path d="M0 0H16V16H0Z" fill="#1458b8" />
            <path d="M3.5 4.5Q9 2 11.5 5L5 12H12.5" stroke="#fff" strokeWidth="2.4" />
          </Icon>
          <h1>92044794: FXCM-USDReal02 - [EURGBP,H1]</h1>
        </div>
        <div className="flex gap-[14px] pr-[9px]">
          <button type="button" aria-label="Minimize"><Icon className="size-[8px]"><path d="M3 8H13" stroke="#222" strokeWidth="1.6" /></Icon></button>
          <button type="button" aria-label="Restore"><Icon className="size-[8px]"><path d="M3 6H10V13H3ZM6 6V3H13V10H10" stroke="#222" strokeWidth="1.6" /></Icon></button>
          <button type="button" aria-label="Close"><Icon className="size-[8px]"><path d="M3 3L13 13M13 3L3 13" stroke="#222" strokeWidth="1.6" /></Icon></button>
        </div>
      </header>

      <div className="flex h-[11px] items-center justify-between border-b border-[#c8c8c8] pr-[2px] pl-[2px]">
        <div className="flex items-center">
          <Icon className="size-[8px]">
            <path d="M1 2H11V9H1Z" fill="#dff0fb" stroke="#7db4dc" strokeWidth="1.4" />
            <path d="M5 7H15V14H5Z" fill="#f6fbff" stroke="#5a9ccc" strokeWidth="1.4" />
          </Icon>
          <div className="ml-[4px] flex gap-[8px]">
            {MENU.map((m) => (
              <button key={m} type="button">{m}</button>
            ))}
          </div>
        </div>
        <div className="flex gap-[2px]">
          <button type="button" aria-label="Minimize chart" className="bg-white"><Icon className="size-[8px]"><path d="M4 12H11" stroke="#222" strokeWidth="2" /></Icon></button>
          <button type="button" aria-label="Restore chart" className="bg-white"><Icon className="size-[8px]"><path d="M4 7H10V12H4ZM6 7V4H12V10H10" stroke="#4a6a94" strokeWidth="1.4" /></Icon></button>
          <button type="button" aria-label="Close chart" className="bg-white"><Icon className="size-[8px]"><path d="M4 4L12 12M12 4L4 12" stroke="#28405f" strokeWidth="2" /></Icon></button>
        </div>
      </div>

      <TopToolbar />
      <DrawToolbar />
      <Chart />

      <div className="flex h-[12px] items-start justify-between border-t border-[#aaa] pl-[3px] leading-[9px] text-[#777]">
        <div className="flex">
          {CHART_TABS.map((t) => (
            <button
              key={t}
              type="button"
              onClick={() => setChart(t)}
              className={
                t === chart
                  ? '-mt-px h-[10px] border border-t-0 border-[#333] bg-white px-[5px] text-black'
                  : 'flex px-[5px]'
              }
            >
              {t}
              {t !== chart && t !== 'EURJPY,H1' && <span className="-mr-[5px] ml-[4px] mt-[1px] h-[7px] w-px bg-[#999]" />}
            </button>
          ))}
        </div>
        <div className="flex gap-[6px] pt-[2px] pr-[4px]">
          <button type="button" aria-label="Scroll tabs left"><Icon className="size-[4px]"><path d="M12 0V16L3 8Z" fill="#666" /></Icon></button>
          <button type="button" aria-label="Scroll tabs right"><Icon className="size-[4px]"><path d="M4 0V16L13 8Z" fill="#666" /></Icon></button>
        </div>
      </div>

      <Terminal />
      <StatusBar />
      <Taskbar />
    </div>
  )
}
